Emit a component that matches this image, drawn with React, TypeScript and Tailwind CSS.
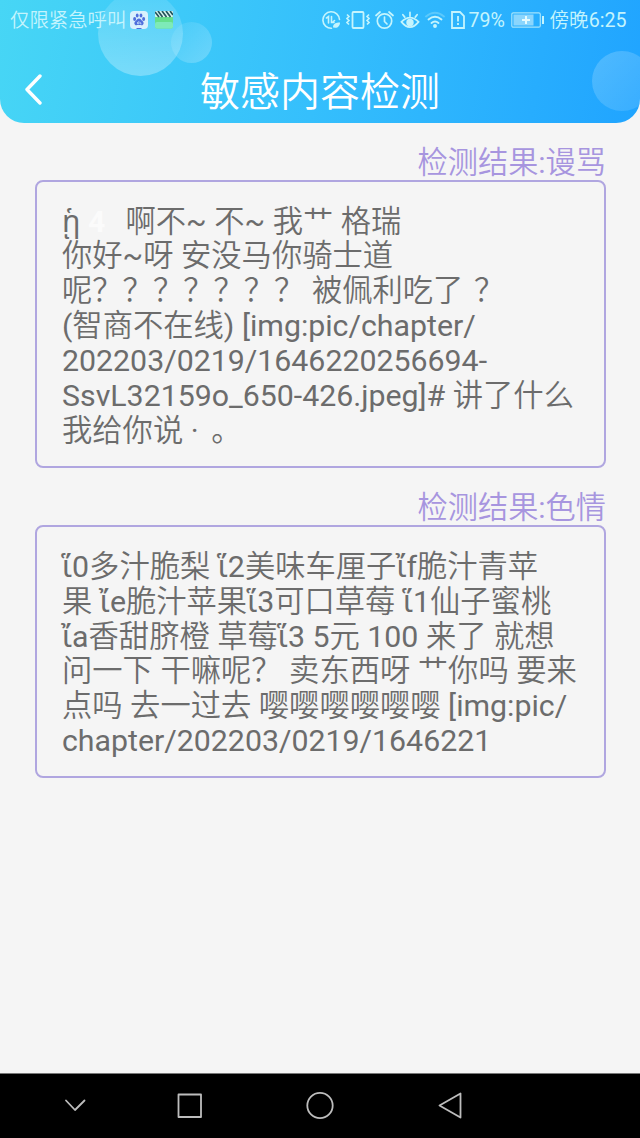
import React from "react";

interface DetectionResult {
  label: string;
  lines: React.ReactNode[];
}

const results: DetectionResult[] = [
  {
    label: "检测结果:谩骂",
    lines: [
      <>
        <span className="inline-block w-[26px] font-['Noto_Sans']">{"\u1f91"}</span>
        <span className="inline-block w-[37.5px] font-bold text-[#fbfbfb]">4</span>
        啊不~ 不~ 我艹 格瑞
      </>,
      "你好~呀 安没马你骑士道",
      <>
        呢？？？？？？？ 被佩利吃了 <span className="ml-[3px]">？</span>
      </>,
      "(智商不在线) [img:pic/chapter/",
      "202203/0219/1646220256694-",
      "SsvL32159o_650-426.jpeg]# 讲了什么",
      <>
        我给你说 · <span className="ml-[5px]">。</span>
      </>,
    ],
  },
  {
    label: "检测结果:色情",
    lines: [
      "\u1f350多汁脆梨 \u1f352美味车厘子\u1f34f脆汁青苹",
      "果 \u1f34e脆汁苹果\u1f353可口草莓 \u1f351仙子蜜桃",
      "\u1f34a香甜脐橙 草莓\u1f353 5元 100 来了 就想",
      "问一下 干嘛呢？ 卖东西呀 艹你吗 要来",
      "点吗 去一过去 嘤嘤嘤嘤嘤嘤 [img:pic/",
      "chapter/202203/0219/1646221",
    ],
  },
];

// polytonic iotas come from Noto Sans, the rest of the line keeps the page stack
const withGreek = (line: React.ReactNode) =>
  typeof line !== "string"
    ? line
    : line.split(/([\u1f34\u1f35])/).map((part, i) =>
        i % 2 ? (
          <span key={i} className="font-['Noto_Sans']">
            {part}
          </span>
        ) : (
          part
        )
      );

const StatusBar: React.FC = () => (
  <div className="relative flex h-10 items-center text-[19.6px] leading-10 whitespace-nowrap text-[#c4f4fd]">
    <span className="ml-[10px] mt-[2px] w-[120px] text-[19.4px]">仅限紧急呼叫</span>
    {/* paw notification */}
    <svg className="w-[18px] h-[18px]" viewBox="0 0 18 18">
      <rect width="18" height="18" rx="4" fill="#d9f1fd" />
      <g fill="#4f6fdc">
        <ellipse cx="4.6" cy="8" rx="1.5" ry="2" />
        <ellipse cx="7.2" cy="4.6" rx="1.4" ry="2" />
        <ellipse cx="11" cy="4.6" rx="1.4" ry="2" />
        <ellipse cx="13.6" cy="8" rx="1.5" ry="2" />
        <path d="M9 7.5c1.8 0 2.4 1.7 3.7 2.8 1.6 1.4 1 4-1 4-1 0-1.7-.2-2.7-.2s-1.7.2-2.7.2c-2 0-2.6-2.6-1-4C6.6 9.2 7.2 7.5 9 7.5z" />
        <rect x="6.5" y="17" width="5" height="1" />
      </g>
      <path d="M7.5 11v1.8h1.3V10M10.2 11v1.8h1.3" fill="none" stroke="#d9f1fd" strokeWidth=".7" />
    </svg>
    {/* clapper notification */}
    <svg className="ml-[7px] w-[18px] h-[18px]" viewBox="0 0 18 18">
      <rect y="5" width="18" height="12.5" rx="2" fill="#65df8c" />
      <rect y="11" width="18" height="6.5" rx="2" fill="#7eeab8" />
      <rect width="18" height="6" rx="1" fill="#d6f5ee" />
      <path d="M0 1l4 5M3 0l4.5 6M7 0l4.5 6M11 0l4.5 6M15 0l3 4" stroke="#24545c" strokeWidth="1.7" />
    </svg>
    <svg className="ml-[149px] w-[19px] h-[20px]" viewBox="0 0 19 20" fill="none" stroke="currentColor" strokeWidth="1.6" strokeLinecap="round">
      <path d="M17.5 9.5A8.3 8.3 0 1 0 9.5 18.3M6.5 13V6.5L4.5 8M9.5 6.5v6h2.5M12.5 10.5l-2 2" />
      <path d="M11 17.5c0-4 3-5 7-5 0 4-3 6-6 5z" fill="currentColor" stroke="none" />
    </svg>
    <svg className="ml-[5px] w-[24px] h-[20px]" viewBox="0 0 24 20" fill="none" stroke="currentColor" strokeWidth="1.8">
      <rect x="6.5" y="2" width="11" height="16" rx="1" />
      <path d="M1 4.5l2 2-2 2 2 2-2 2 2 2M23 4.5l-2 2 2 2-2 2 2 2-2 2" strokeWidth="1.6" />
    </svg>
    <svg className="ml-[5px] w-[19px] h-[20px]" viewBox="0 0 19 20" fill="none" stroke="currentColor" strokeWidth="1.7" strokeLinecap="round">
      <circle cx="9.5" cy="11" r="7.2" />
      <path d="M9.5 7v4.5l2.5 2.5M1 5.5L5 2M18 5.5L14 2" />
    </svg>
    <svg className="ml-[6px] w-[20px] h-[20px]" viewBox="0 0 21 20" fill="none" stroke="currentColor" strokeWidth="1.8" strokeLinecap="round">
      <path d="M1.5 12Q10.5 3 19.5 12Q10.5 23 1.5 12zM10.5 6V2M5 7L3 4.5M16 7l2-2.5" />
      <circle cx="10.5" cy="12.5" r="3" fill="currentColor" />
    </svg>
    <svg className="ml-[5px] w-[20px] h-[18px]" viewBox="0 0 20 18" fill="none" stroke="currentColor" strokeWidth="1.9" strokeLinecap="round">
      <path d="M1 5.5Q10-2 19 5.5" opacity=".3" />
      <path d="M3.5 8.5Q10 3 16.5 8.5M6.5 12Q10 9 13.5 12" />
      <circle cx="10" cy="15" r="1" fill="currentColor" />
    </svg>
    <svg className="ml-[6px] w-[14px] h-[18px]" viewBox="0 0 14 18" fill="none" stroke="currentColor" strokeWidth="1.8">
      <path d="M1 1h8l4 4v12H1zM7 5v5.5M7 12v2" />
    </svg>
    <span className="ml-[3.5px] mt-px w-[42.5px]">79%</span>
    <svg className="w-[34px] h-[16px]" viewBox="0 0 34 16" fill="none">
      <rect x=".8" y=".8" width="28.5" height="14.4" rx="1.5" stroke="#a3e3fc" strokeWidth="1.2" />
      <rect x="2.5" y="2.5" width="20" height="11" fill="#8bd6fd" />
      <path d="M15 4v8M11 8h8" stroke="#e4fbff" strokeWidth="2" />
      <path d="M32 4v8" stroke="#c4f4fd" strokeWidth="2" />
    </svg>
    <span className="ml-[4.5px] mt-[2px]">傍晚6:25</span>
  </div>
);

const Header: React.FC = () => (
  <header className="relative h-[123px] shrink-0 overflow-hidden rounded-b-[24px] bg-linear-[100deg] from-[#47d6f5] via-[#35bffc] to-[#20a4ff]">
    <div className="absolute -top-[9px] left-[98px] size-[85px] rounded-full bg-linear-to-b from-white/10 to-white/30" />
    <div className="absolute top-[22px] left-[171px] size-[41px] rounded-full bg-linear-to-br from-white/5 to-white/25" />
    <div className="absolute top-[51px] left-[592px] size-[60px] rounded-full bg-linear-to-br from-white/20 to-white/10" />
    <StatusBar />
    <div className="relative flex h-[83px] items-center">
      <svg className="ml-[24px] mt-[14px] h-[32px] w-[20px]" viewBox="0 0 20 32" fill="none" stroke="white" strokeWidth="3.4" strokeLinecap="round" strokeLinejoin="round">
        <path d="M16 3L3 16.5L16 30" />
      </svg>
      <h1 className="mt-[22px] mr-[44px] flex-1 text-center text-[40px] leading-[50px] text-white">敏感内容检测</h1>
    </div>
  </header>
);

const ResultCard: React.FC<{ result: DetectionResult }> = ({ result }) => (
  <section className="mb-[22px]">
    <h2 className="h-[35px] text-right text-[30.2px] leading-[35px] text-[#a795df]">{result.label}</h2>
    <div className="rounded-lg border-2 border-[#b0a6e0] pt-[21px] pb-[18px] pl-[25px] text-[#6c6c6c]">
      {result.lines.map((line, i) => (
        <p key={i} className="h-[35px] text-[30.3px] leading-[35px] whitespace-nowrap">
          {withGreek(line)}
        </p>
      ))}
    </div>
  </section>
);

const NavBar: React.FC = () => (
  <nav className="flex h-[65px] shrink-0 items-center border-t border-[#777] bg-black">
    <svg className="h-[40px] w-[500px]" viewBox="0 0 500 40" fill="none" stroke="#bdbdbd" strokeWidth="1.8" strokeLinejoin="round" strokeLinecap="round">
      <path d="M66 14.5L75 24L84.5 14.5" />
      <rect x="178.5" y="8.5" width="22.5" height="22.5" />
      <circle cx="320" cy="19.5" r="12.7" />
      <path d="M439.5 19.5L460.5 7.5V31.5Z" />
    </svg>
  </nav>
);

const App: React.FC = () => {
  return (
    <div className="flex h-[1138px] w-[640px] flex-col overflow-hidden bg-[#f5f5f5] font-[Roboto,'Noto_Sans_CJK_SC_DemiLight','Noto_Sans_CJK_SC',sans-serif]">
      <Header />
      <main className="flex-1 pt-[22px] pr-[34px] pl-[35px]">
        {results.map((result) => (
          <ResultCard key={result.label} result={result} />
        ))}
      </main>
      <NavBar />
    </div>
  );
};

export default App;
